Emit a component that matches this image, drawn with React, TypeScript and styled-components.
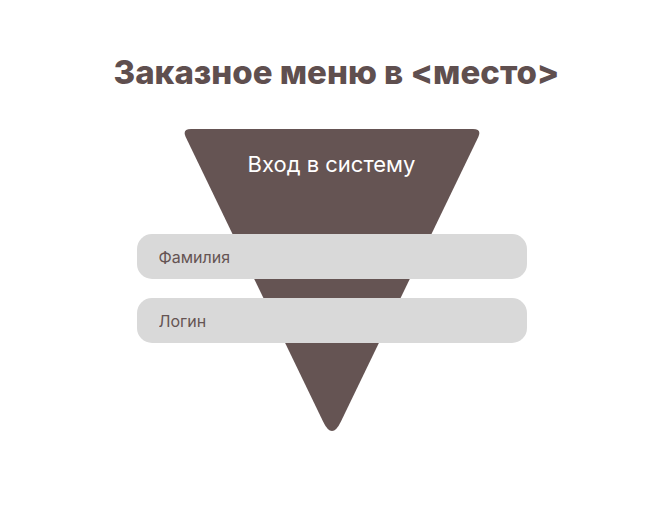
import React from "react";
import styled, { createGlobalStyle } from "styled-components";

const brown = "#655453";

const GlobalStyle = createGlobalStyle`
  * {
    box-sizing: border-box;
  }

  body {
    margin: 0;
    background: #ffffff;
    font-family: Inter, "Noto Sans", sans-serif;
  }
`;

const Page = styled.main`
  display: flex;
  flex-direction: column;
  align-items: center;
  padding-top: 52px;
`;

const Title = styled.h1`
  margin: 0 0 0 10px;
  font-size: 33px;
  line-height: 40px;
  font-weight: 800;
  color: #5f4f4f;
`;

const Panel = styled.form`
  position: relative;
  width: 390px;
  margin-top: 37px;
  height: 302px;
  display: flex;
  flex-direction: column;
  align-items: center;
`;

const Funnel = styled.svg`
  position: absolute;
  top: 0;
  left: 45px;
  width: 300px;
  height: 311px;
  z-index: 0;
`;

const Caption = styled.h2`
  position: relative;
  margin: 21px 0 0;
  font-size: 22px;
  line-height: 28px;
  font-weight: 400;
  color: #ffffff;
`;

const Fields = styled.div`
  position: relative;
  display: flex;
  flex-direction: column;
  gap: 19px;
  width: 100%;
  margin-top: 56px;
`;

const Field = styled.input`
  width: 100%;
  height: 45px;
  border: none;
  border-radius: 15px;
  background: #d9d9d9;
  padding: 0 22px;
  font-family: Inter, "Noto Sans", sans-serif;
  font-size: 16px;
  color: ${brown};
  outline: none;

  &::placeholder {
    color: ${brown};
    opacity: 1;
  }
`;

const App = () => {
  return (
    <>
      <GlobalStyle />
      <Page>
        <Title>Заказное меню в &lt;место&gt;</Title>
        <Panel onSubmit={(e) => e.preventDefault()}>
          <Funnel viewBox="0 0 300 311" aria-hidden="true">
            <path
              d="M 9 0 L 291 0 Q 300 0 296.3 8.1 L 158.7 293 Q 150 311 141.3 293 L 3.7 8.1 Q 0 0 9 0 Z"
              fill={brown}
            />
          </Funnel>
          <Caption>Вход в систему</Caption>
          <Fields>
            <Field placeholder="Фамилия" />
            <Field placeholder="Логин" />
          </Fields>
        </Panel>
      </Page>
    </>
  );
};

export default App;
